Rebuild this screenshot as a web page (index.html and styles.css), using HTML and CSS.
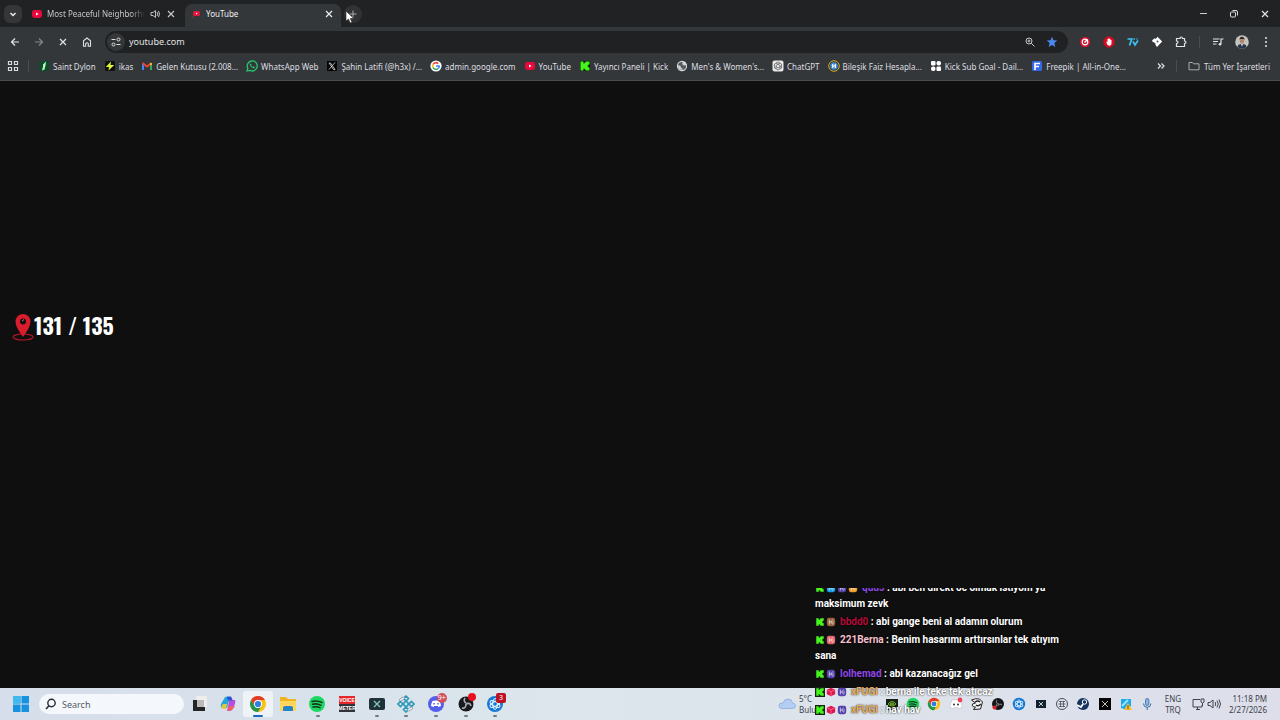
FILE: index.html
```html
<!DOCTYPE html>
<html lang="tr">
<head>
<meta charset="utf-8">
<title>YouTube</title>
<link rel="stylesheet" href="styles.css">
</head>
<body>
<svg class="defs" aria-hidden="true">
  <symbol id="x" viewBox="0 0 12 12"><path d="M3 3l6 6M9 3l-6 6" stroke="currentColor" stroke-width="1.2" fill="none"/></symbol>
  <symbol id="yt" viewBox="0 0 12 12"><rect x="1" y="2" width="10" height="8" rx="2.4" fill="#e8083c"/><path d="M5 4.400v3.200L7.700 6z" fill="#fff"/></symbol>
  <symbol id="kick" viewBox="0 0 12 12"><path d="M1.500 1.500h3v2h1v-1h1v-1h4v3h-1v1h-1v1h1v1h1v3h-4v-1h-1v-1h-1v2h-3z" fill="#45f51c"/></symbol>
  <symbol id="chrome" viewBox="0 0 18 18"><circle cx="9" cy="9" r="8" fill="#fbc116"/><path d="M9 5h6.900A8 8 0 0 0 2.100 5L5.500 11z" fill="#e33b2e"/><path d="M2.100 5A8 8 0 0 0 9 17l3.500-6L9 13 5.500 11z" fill="#219653"/><circle cx="9" cy="9" r="4" fill="#fff"/><circle cx="9" cy="9" r="3.100" fill="#2d7de5"/></symbol>
  <symbol id="spotify" viewBox="0 0 18 18"><circle cx="9" cy="9" r="8" fill="#1ed760"/><path d="M4 6.500q5-1.500 10 1M4.500 9.300q4.500-1.200 8.500 1M5 12q4-1 7 .700" fill="none" stroke="#12351f" stroke-width="1.500" stroke-linecap="round"/></symbol>
  <symbol id="obs" viewBox="0 0 18 18"><circle cx="9" cy="9" r="7.500" fill="#191a1e"/><path d="M8 3q-2 3 1 5M14 11q-1-4-5-2M5 13q4 1 4-4" fill="none" stroke="#a9adb5" stroke-width="1.600"/></symbol>
  <symbol id="bnet" viewBox="0 0 18 18"><circle cx="9" cy="9" r="8" fill="#1678d4"/><ellipse cx="9" cy="9" rx="5.500" ry="2.300" transform="rotate(30 9 9)" fill="none" stroke="#e5f5ff"/><ellipse cx="9" cy="9" rx="5.500" ry="2.300" transform="rotate(90 9 9)" fill="none" stroke="#e5f5ff"/><ellipse cx="9" cy="9" rx="5.500" ry="2.300" transform="rotate(150 9 9)" fill="none" stroke="#e5f5ff"/></symbol>
  <symbol id="cube" viewBox="0 0 12 12"><path d="M6 .8l5 2.400v5.600l-5 2.400-5-2.400V3.200z" fill="#dd174f"/><path d="M1 3.200l5 2.400 5-2.400M6 5.600v5.500" stroke="#ff6e92" fill="none"/></symbol>
  <symbol id="badge" viewBox="0 0 12 12"><rect x="1" y="1" width="10" height="10" rx="2.500" fill="currentColor"/><path d="M4 3v6M4 6h2l2-3M6 6l2 3M8.500 5v3" stroke="#fff" stroke-opacity=".75" fill="none"/></symbol>
  <symbol id="xsplit" viewBox="0 0 18 18"><rect x="1" y="3" width="16" height="12" rx="2" fill="#203039"/><path d="M6 6l6 6M12 6l-6 6" stroke="#82c7ab" stroke-width="1.400"/></symbol>
</svg>

<header class="browser">
  <div class="tabs" role="tablist">
    <button class="tab-search" aria-label="Search tabs"><svg class="i12" viewBox="0 0 12 12"><path d="M3.500 5L6 7.500 8.500 5" fill="none" stroke="#eee" stroke-width="1.500"/></svg></button>
    <div class="tab" role="tab">
      <svg class="i12"><use href="#yt"/></svg><span class="tab-title fade">Most Peaceful Neighborho</span>
      <svg class="i12" viewBox="0 0 12 12"><path d="M2 4.500h2L6.500 2.500v7L4 7.500H2z" fill="none" stroke="#bbb"/><path d="M8 4q1.500 2 0 4M9.500 3q2 3 0 6" fill="none" stroke="#bbb"/></svg>
      <button class="icon close" aria-label="Close tab"><svg class="i12"><use href="#x"/></svg></button>
    </div>
    <div class="tab active" role="tab" aria-selected="true">
      <svg class="i12" viewBox="0 0 12 12"><rect x="3" y="3" width="7" height="5" rx="1.500" fill="#e2153e"/><path d="M6 4.500v2L7.500 5.500z" fill="#fff"/><path d="M2.500 8.500l1 1" stroke="#a44"/></svg><span class="tab-title">YouTube</span>
      <button class="icon close" aria-label="Close tab"><svg class="i12"><use href="#x"/></svg></button>
    </div>
    <button class="new-tab" aria-label="New tab"><svg class="i12" viewBox="0 0 12 12"><path d="M6 2.500v7M2.500 6h7" stroke="#aaa"/></svg></button>
    <div class="window-controls">
      <button class="icon" aria-label="Minimize"><svg class="i12" viewBox="0 0 12 12"><path d="M3 5.500h7" stroke="#ccc"/></svg></button>
      <button class="icon" aria-label="Restore"><svg class="i12" viewBox="0 0 12 12"><rect x="2.500" y="4" width="5" height="5" rx="1" fill="none" stroke="#ddd"/><path d="M4.500 2.500H8q1.500 0 1.500 1.500v3.500" fill="none" stroke="#ddd"/></svg></button>
      <button class="icon" aria-label="Close"><svg class="i12"><use href="#x"/></svg></button>
    </div>
  </div>

  <div class="toolbar">
    <button class="icon" aria-label="Back"><svg class="i12" viewBox="0 0 12 12"><path d="M10 6H2.500M6 2.500L2.500 6 6 9.500" fill="none" stroke="#e6e6e6" stroke-width="1.200"/></svg></button>
    <button class="icon" aria-label="Forward"><svg class="i12" viewBox="0 0 12 12"><path d="M2 6h7.500M6 2.500L9.500 6 6 9.500" fill="none" stroke="#85888b" stroke-width="1.200"/></svg></button>
    <button class="icon" aria-label="Stop"><svg class="i12"><use href="#x"/></svg></button>
    <button class="icon" aria-label="Home"><svg class="i12" viewBox="0 0 12 12"><path d="M2.500 10.300V4.800L6 2l3.500 2.800v5.500H7.300V7.500q-1.300-1.600-2.600 0v2.800z" fill="none" stroke="#e0e0e0" stroke-width="1.100"/></svg></button>
    <div class="omnibox">
      <button class="site" aria-label="Site information"><svg class="i12" viewBox="0 0 12 12"><path d="M1.500 3.500h4M6.500 8.500h4" stroke="#ddd" stroke-width="1.200"/><circle cx="8.500" cy="3.500" r="1.500" fill="none" stroke="#ddd"/><circle cx="3.500" cy="8.500" r="1.500" fill="none" stroke="#ddd"/></svg></button>
      <input class="url" type="text" aria-label="Address" value="youtube.com">
      <button class="icon narrow" aria-label="Zoom"><svg class="i12" viewBox="0 0 12 12"><circle cx="5" cy="5" r="3" fill="none" stroke="#c8c8c8"/><path d="M7.200 7.200l3.300 3.300M3.500 5h3M5 3.500v3" stroke="#c8c8c8"/></svg></button>
      <button class="icon narrow" aria-label="Bookmark"><svg class="i12" viewBox="0 0 12 12"><path d="M6 .800l1.500 3.500 3.800.300-2.900 2.500.9 3.800L6 8.900l-3.300 2 .9-3.800L.7 4.600l3.800-.3z" fill="#4c87f0"/></svg></button>
    </div>
    <button class="icon" aria-label="Extension"><svg class="i12" viewBox="0 0 12 12"><circle cx="6" cy="6" r="5.200" fill="#cf1131"/><circle cx="6" cy="6" r="2.800" fill="none" stroke="#fff" stroke-width="1.200"/><path d="M5.500 6.500L8.500 3.500" stroke="#fff" stroke-width="1.500"/></svg></button>
    <button class="icon" aria-label="Ad blocker"><svg class="i12" viewBox="0 0 12 12"><path d="M4 .500h4L11.500 4v4L8 11.500H4L.5 8V4z" fill="#d80a20"/><path d="M3.500 5.500l1 .500V3h1V2.200h1V3h1v1h1v3.500q0 2-2 2.300T3.500 7z" fill="#fff"/></svg></button>
    <button class="icon" aria-label="7TV"><svg class="i12" viewBox="0 0 12 12"><path d="M.5 3h4.300L2.500 9.500M6 5.500l2 3.500 3-4.500M6.500 3h1.500M9.500 3h1" fill="none" stroke="#39c4f4" stroke-width="1.700"/></svg></button>
    <button class="icon" aria-label="Extension"><svg class="i12" viewBox="0 0 12 12"><path d="M6.500 .800l4.700 4.700L6 11 4.500 9V7.500L.8 5 3 2.500l2 .200z" fill="#fff"/><circle cx="6.500" cy="5.500" r="1" fill="#555"/></svg></button>
    <button class="icon" aria-label="Extensions"><svg class="i12" viewBox="0 0 12 12"><path d="M1.500 2.500H5q0-1.500 1.200-1.500T7.500 2.500h2V5q1.500 0 1.500 1.200T9.500 7.500v3h-8v-3q1.500 0 1.500-1.200T1.500 5z" fill="none" stroke="#e4e4e4" stroke-width="1.200"/></svg></button>
    <span class="rule"></span>
    <button class="icon" aria-label="Media"><svg class="i12" viewBox="0 0 12 12"><path d="M1 3h6.500M1 5.500h5M1 8h3.500M9 8V3h2.500" fill="none" stroke="#e4e4e4" stroke-width="1.200"/><circle cx="8" cy="8.200" r="1.300" fill="#e4e4e4"/></svg></button>
    <button class="icon" aria-label="Profile"><svg class="i14" viewBox="0 0 14 14"><circle cx="7" cy="7" r="6.800" fill="#c3c4bf"/><path d="M2.500 12q0-3 4.500-3t4.500 3Q7 15.500 2.500 12z" fill="#26344a"/><ellipse cx="7" cy="5.800" rx="2.200" ry="3" fill="#b78670"/><path d="M4.500 5q0-3.300 2.500-3.300T9.500 5L8.800 4H5.200z" fill="#302925"/><path d="M6.200 9h1.600L7 12z" fill="#fff"/></svg></button>
    <button class="icon" aria-label="Menu"><svg class="i12" viewBox="0 0 12 12" fill="#e4e4e4"><circle cx="6" cy="2" r="1"/><circle cx="6" cy="6" r="1"/><circle cx="6" cy="10" r="1"/></svg></button>
  </div>

  <nav class="bookmarks" aria-label="Bookmarks">
    <button class="icon apps" aria-label="Apps"><svg class="i12" viewBox="0 0 12 12" fill="none" stroke="#d8d8d8" stroke-width="1.200"><path d="M1.500 1.500h3v3h-3zM7.500 1.500h3v3h-3zM1.500 7.500h3v3h-3zM7.500 7.500h3v3h-3z"/></svg></button>
    <span class="rule"></span>
    <a class="bm" href="#"><svg class="i12" viewBox="0 0 12 12"><rect x="1" y="1" width="10" height="10" rx="2" fill="#0f4a29"/><path d="M8 1.500L5 4.500v2L4 10.500l2.500-1 1-4z" fill="#bdf3c5"/></svg>Saint Dylon</a>
    <a class="bm" href="#"><svg class="i12" viewBox="0 0 12 12"><rect x="1" y="1" width="10" height="10" rx="1.500" fill="#111"/><path d="M7 1.500L1.800 7H5l-.5 3.500L10.200 5H6.500z" fill="#dafa39"/></svg>ikas</a>
    <a class="bm" href="#"><svg class="i12" viewBox="0 0 12 12" fill="none" stroke-width="2"><path d="M2 10V4" stroke="#4285f4"/><path d="M10 10V4" stroke="#34a853"/><path d="M1.500 3L6 6.500 10.500 3" stroke="#ea4335"/><path d="M10 5V3" stroke="#fbbc04"/></svg>Gelen Kutusu (2.008...</a>
    <a class="bm" href="#"><svg class="i12" viewBox="0 0 12 12"><path d="M1 11l.8-2.800A5 5 0 1 1 4 10.400z" fill="none" stroke="#25c768" stroke-width="1.300"/><path d="M4 3.500q-1 3 4 5l1-1.500-1.500-.7-.7.700Q5.300 6.300 5.200 5l.5-.5z" fill="#25c768"/></svg>WhatsApp Web</a>
    <a class="bm" href="#"><svg class="i12" viewBox="0 0 12 12"><rect x="1" y="1" width="10" height="10" fill="#050505"/><path d="M3 3h1.500L9 9.500H7.500zM9 2.500L3 9.500" fill="none" stroke="#ddd" stroke-width=".8"/></svg>Şahin Latifi (@h3x) /...</a>
    <a class="bm" href="#"><svg class="i12" viewBox="0 0 12 12"><circle cx="6" cy="6" r="5.600" fill="#fff"/><g fill="none" stroke-width="1.600"><path d="M8.300 3.600A3.300 3.300 0 0 0 3 4.500" stroke="#ea4335"/><path d="M3 4.500a3.300 3.300 0 0 0 0 3" stroke="#fbbc04"/><path d="M3 7.500a3.300 3.300 0 0 0 5.200 1" stroke="#34a853"/><path d="M8.200 8.500Q9.300 7.500 9.200 6H6" stroke="#4285f4"/></g></svg>admin.google.com</a>
    <a class="bm" href="#"><svg class="i12"><use href="#yt"/></svg>YouTube</a>
    <a class="bm" href="#"><svg class="i12" viewBox="0 0 12 12"><rect x="1" y="1" width="10" height="10" rx="1" fill="#071509"/><use href="#kick" width="12" height="12"/></svg>Yayıncı Paneli | Kick</a>
    <a class="bm" href="#"><svg class="i12" viewBox="0 0 12 12"><circle cx="6" cy="6" r="4.600" fill="#555a5e" stroke="#d6d6d6" stroke-width="1.100"/><path d="M1.500 5l3 1 .5 2 1.500.500V10L3 9zM5 1.500l2 1L6 4l2 1.500 2.500-.500L9 2z" fill="#d6d6d6"/></svg>Men's &amp; Women's...</a>
    <a class="bm" href="#"><svg class="i12" viewBox="0 0 12 12"><rect x=".5" y=".5" width="11" height="11" rx="2" fill="#e8e8e8"/><path d="M6 2l3.500 2v4L6 10 2.500 8V4zM4 3l4 2.500V9M8 3L4 5.500V9M4 6.500L6 8l3.500-2" fill="none" stroke="#555" stroke-width=".7"/></svg>ChatGPT</a>
    <a class="bm" href="#"><svg class="i12" viewBox="0 0 12 12"><circle cx="6" cy="6" r="5.300" fill="#383b22" stroke="#d1ad2a"/><circle cx="6" cy="6" r="3.800" fill="#428bdc"/><path d="M4.700 4v4M7.300 4v4M4.700 6h2.600" stroke="#fff" stroke-width="1.100"/></svg>Bileşik Faiz Hesapla...</a>
    <a class="bm" href="#"><svg class="i12" viewBox="0 0 12 12" fill="#fff"><rect x="1" y="1" width="4.500" height="4.500" rx="1"/><rect x="6.500" y="1" width="4.500" height="4.500" rx="2"/><rect x="1" y="6.500" width="4.500" height="4.500" rx="2"/><rect x="6.500" y="6.500" width="4.500" height="4.500" rx="1"/></svg>Kick Sub Goal - Dail...</a>
    <a class="bm" href="#"><svg class="i12" viewBox="0 0 12 12"><rect x="1" y="1" width="10" height="10" rx="1.500" fill="#3568e8"/><path d="M4 10V3.500h5M4 6.500h4" fill="none" stroke="#fff" stroke-width="1.700"/></svg>Freepik | All-in-One...</a>
    <button class="icon more" aria-label="More bookmarks"><svg class="i12" viewBox="0 0 12 12"><path d="M3 3.500L5.500 6 3 8.500M6.500 3.500L9 6 6.500 8.500" fill="none" stroke="#e4e4e4" stroke-width="1.200"/></svg></button>
    <span class="rule"></span>
    <a class="bm all" href="#"><svg class="i12" viewBox="0 0 12 12"><path d="M1 2.500h3.500l1 1.300H11v6H1z" fill="none" stroke="#aaa"/></svg>Tüm Yer İşaretleri</a>
  </nav>
</header>

<main class="page"></main>

<footer class="taskbar">
  <button class="start" aria-label="Start"><svg class="i18" viewBox="0 0 18 18"><path d="M1 1h7.500v7.500H1zM9.500 1H17v7.500H9.500zM1 9.500h7.500V17H1zM9.500 9.500H17V17H9.500z" fill="#1792df"/><path d="M1 1h7.500v7.500H1z" fill="#42b9ee"/></svg></button>
  <label class="search"><svg class="i12" viewBox="0 0 12 12"><circle cx="6.500" cy="5" r="3.700" fill="none" stroke="#252a34" stroke-width="1.400"/><path d="M4 7.800L1 11" stroke="#252a34" stroke-width="1.600"/></svg><input type="search" placeholder="Search" aria-label="Search"></label>
  <div class="apps-row">
    <button class="app" aria-label="Task view"><svg class="i18" viewBox="0 0 18 18"><path d="M6 1h11v11H6z" fill="#eeeeec"/><path d="M3 5h4v7h8v4H3z" fill="#252525"/><path d="M7 5h7v7H7z" fill="#bbb"/></svg></button>
    <button class="app" aria-label="Copilot"><svg class="i18" viewBox="0 0 18 18"><path d="M6 2h5L8 13H4q-3 0-2-4z" fill="#26a6d8"/><path d="M4 9h4l-1 5H4q-3-1 0-5z" fill="#e6c43c"/><path d="M11 2q2 0 2.500 3H16q1 2-1 6l-2 4q-1 1-5 1z" fill="#b34cdf"/><path d="M8 16l2-5h6l-3 4q-1 1-5 1z" fill="#f15d6c"/><path d="M7.500 1.500H12l1.500 4H9z" fill="#2855cf"/></svg></button>
    <button class="app current" aria-label="Chrome"><svg class="i18"><use href="#chrome"/></svg></button>
    <button class="app" aria-label="Files"><svg class="i18" viewBox="0 0 18 18"><path d="M1 2h6l2 2h8v12H1z" fill="#eeb421"/><path d="M1 6h16v10H1z" fill="#ffd55d"/><path d="M4 13q0-2 2-2h6q2 0 2 2v3H4z" fill="#2384c6"/></svg></button>
    <button class="app run" aria-label="Spotify"><svg class="i18"><use href="#spotify"/></svg></button>
    <button class="app" aria-label="Voicemeeter"><svg class="i18" viewBox="0 0 18 18"><path d="M1 1h16v8H1z" fill="#e5282b"/><path d="M1 9h16v8H1z" fill="#30333a"/><text x="9" y="7" class="tile">VOICE</text><text x="9" y="15" class="tile">METER</text></svg></button>
    <button class="app run" aria-label="XSplit"><svg class="i18"><use href="#xsplit"/></svg></button>
    <button class="app run" aria-label="Utility"><svg class="i18" viewBox="0 0 18 18" fill="none" stroke="#2d99bb" stroke-width="1.600"><path d="M9 1l2.500 2.500L9 6 6.500 3.500zM3.500 6.500L6 9l-2.500 2.500L1 9zM14.500 6.500L17 9l-2.500 2.500L12 9zM9 12l2.500 2.500L9 17l-2.500-2.500z"/><circle cx="9" cy="9" r="2.200"/><ellipse cx="5" cy="4" rx="3" ry="1.300" transform="rotate(-30 5 4)" fill="#e6edf2" stroke="#7a8494" stroke-width=".6"/><ellipse cx="13" cy="14" rx="3" ry="1.300" transform="rotate(-30 13 14)" fill="#e6edf2" stroke="#7a8494" stroke-width=".6"/></svg></button>
    <button class="app run" aria-label="Discord"><svg class="i18" viewBox="0 0 18 18"><circle cx="9" cy="9" r="8" fill="#5560ea"/><path d="M5.500 6q3.500-1 7 0 1.500 3 1.500 5l-2.500 1-.7-1H7.200l-.7 1L4 11q0-2 1.500-5z" fill="#fff"/><path d="M7 8v1.500M11 8v1.500" stroke="#5560ea" stroke-width="1.500"/></svg><span class="count soft">9+</span></button>
    <button class="app run" aria-label="OBS"><svg class="i18"><use href="#obs"/></svg><span class="count dot"></span></button>
    <button class="app run" aria-label="Battle.net"><svg class="i18"><use href="#bnet"/></svg><span class="count square">3</span></button>
  </div>
  <div class="weather"><svg class="cloud" viewBox="0 0 18 14"><path d="M4 11.500Q1 11.500 1 8.500T5 6q1-4 5-4 4 0 4.500 4 3 .3 3 3T14 11.500z" fill="#b4cdf2" stroke="#87a4d6" stroke-width=".7"/></svg><span>5°C<br>Bulu</span></div>
  <div class="tray">
    <svg class="i14" viewBox="0 0 14 14"><path d="M1 2h12v11H1z" fill="#142013"/><path d="M3 7q4-5 8 0-4 4-8 0zM5 7q2-2 4 0-2 2-4 0" fill="none" stroke="#76b52b"/></svg>
    <svg class="i14"><use href="#spotify"/></svg>
    <svg class="i14"><use href="#chrome"/></svg>
    <svg class="i14" viewBox="0 0 14 14"><path d="M3 3q4-1 8 0 2 4 2 7l-3 2-1-1.500H5L4 12l-3-2q0-3 2-7z" fill="#fff" stroke="#b5b7c4" stroke-width=".5"/><circle cx="5" cy="7.500" r="1" fill="#333"/><circle cx="9" cy="7.500" r="1" fill="#333"/><circle cx="11" cy="3" r="2.400" fill="#ef4255"/></svg>
    <svg class="i14" viewBox="0 0 14 14"><path d="M1.500 3q4-2 8-1l3 3-2 7-7 .500 2-2.500q-4 0-3-3l3-1z" fill="#f4f4f4" stroke="#222"/><path d="M5 5q3-2 5 0M6 8q2 2 5-1" fill="none" stroke="#222" stroke-width="1.300"/></svg>
    <svg class="i14" viewBox="0 0 14 14"><circle cx="7" cy="7" r="6" fill="#14151a"/><path d="M6 3q-2 3 2 4M11 8q-3-2-4 1M3 10q3 0 3-3" fill="none" stroke="#777" stroke-width="1.200"/><circle cx="3.500" cy="10.500" r="2" fill="#dc2229"/></svg>
    <svg class="i14"><use href="#bnet"/></svg>
    <svg class="i14" viewBox="0 0 14 14"><path d="M2 3h10v8H2z" fill="#142230"/><path d="M5 5l4 4M9 5L5 9" stroke="#c5d1d8"/></svg>
    <svg class="i14" viewBox="0 0 14 14" fill="none" stroke="#4d5058"><circle cx="7" cy="7" r="5.500"/><path d="M4 4.500h6M3.500 7h7M4 9.500h6M5.500 4v6M8.500 4v6" stroke-width=".8"/></svg>
    <svg class="i14" viewBox="0 0 14 14"><circle cx="7" cy="7" r="6" fill="#16345f"/><circle cx="8.500" cy="5" r="2.200" fill="#16345f" stroke="#fff"/><path d="M1 8l4 2 2-3" fill="none" stroke="#fff" stroke-width="1.800"/></svg>
    <svg class="i14" viewBox="0 0 14 14"><path d="M1 1h12v12H1z" fill="#050505"/><path d="M4 4l6 6M10 4l-6 6" stroke="#bbb"/></svg>
    <svg class="i14" viewBox="0 0 14 14"><path d="M2 2h10v7l-4 4-6-2z" fill="#1eabe9"/><path d="M3 9l6-6" stroke="#9ce2ff" stroke-width="2"/><path d="M9 6l4 7H5z" fill="#ffbd22"/><path d="M9 8.500v2M9 11.200v1" stroke="#333"/></svg>
    <svg class="i14" viewBox="0 0 14 14"><rect x="5.500" y="1.500" width="3.400" height="7" rx="1.700" fill="#86b5e5" stroke="#396ca6" stroke-width=".8"/><path d="M3.500 6.500q0 3.800 3.700 3.800t3.700-3.800M7.200 10.500V13" fill="none" stroke="#396ca6"/></svg>
  </div>
  <div class="lang">ENG<br>TRQ</div>
  <svg class="i14" viewBox="0 0 14 14" fill="none" stroke="#3e4350"><path d="M9 2.500H2v7.500h9V8M5 12.500h4M6.500 10v2.500M10 2h3v3q-1.500 2-3 0zM11.500 6v3"/></svg>
  <svg class="i14 speaker" viewBox="0 0 14 14" fill="none" stroke="#3e4350"><path d="M1 5.500h2L6 3v8L3 8.500H1zM8 5q1.500 2 0 4M10 3.500q2.500 3.500 0 7M12 2.500q3 4.500 0 9"/></svg>
  <time class="clock" datetime="2026-02-27T23:18">11:18 PM<br>2/27/2026</time>
</footer>

<div class="counter"><svg class="pin" viewBox="0 0 22 28"><ellipse cx="11" cy="24" rx="10" ry="3" fill="none" stroke="#b31627" stroke-width="1.200"/><path d="M11 24Q3.500 14 3.500 8.500a7.500 7.500 0 0 1 15 0Q18.500 14 11 24z" fill="#d91c2e"/><circle cx="11" cy="8.500" r="3" fill="#1c0d10"/><path d="M10 8l2-1.500" stroke="#887"/></svg><span class="score">131 / 135</span></div>

<section class="chat" aria-label="Chat">
  <p><svg class="b"><use href="#kick"/></svg><svg class="b sky"><use href="#badge"/></svg><svg class="b indigo"><use href="#badge"/></svg><svg class="b orange"><use href="#badge"/></svg><b class="violet">quu5</b> : abi ben direkt öc olmak istiyom ya<br>maksimum zevk</p>
  <p><svg class="b"><use href="#kick"/></svg><svg class="b brown"><use href="#badge"/></svg><b class="red">bbdd0</b> : abi gange beni al adamın olurum</p>
  <p><svg class="b"><use href="#kick"/></svg><svg class="b rose"><use href="#badge"/></svg><b class="pink">221Berna</b> : Benim hasarımı arttırsınlar tek atıyım<br>sana</p>
  <p><svg class="b"><use href="#kick"/></svg><svg class="b indigo"><use href="#badge"/></svg><b class="violet">lolhemad</b> : abi kazanacağız gel</p>
  <p><svg class="b dark"><use href="#kick"/></svg><svg class="b"><use href="#cube"/></svg><svg class="b indigo"><use href="#badge"/></svg><b class="gold">xFUGI</b> : berna ile teke tek atıcaz</p>
  <p><svg class="b dark"><use href="#kick"/></svg><svg class="b"><use href="#cube"/></svg><svg class="b indigo"><use href="#badge"/></svg><b class="gold">xFUGI</b> : hav hav</p>
</section>

<svg class="cursor" viewBox="0 0 10 14" aria-hidden="true"><path d="M1 1v10l2.500-2L5.200 13l1.800-.8-1.700-3.700H8.800z" fill="#fff" stroke="#222" stroke-width=".6"/></svg>
</body>
</html>
```
FILE: styles.css
```css
* { box-sizing: border-box; }
body {
  margin: 0;
  min-height: 100vh;
  display: flex;
  flex-direction: column;
  position: relative;
  overflow: hidden;
  background: #0f0f0f;
  color: #e3e3e3;
  font-family: "Noto Sans", "Open Sans", sans-serif;
  font-size: 8px;
}
button { padding: 0; border: 0; background: none; color: inherit; font: inherit; }
input { border: 0; padding: 0; background: none; font: inherit; outline: none; min-width: 0; }
svg { display: block; flex: none; }
.defs { position: absolute; width: 0; height: 0; }
.i12 { width: 12px; height: 12px; }
.i14 { width: 14px; height: 14px; }
.i18 { width: 18px; height: 18px; }
.icon { width: 24px; height: 20px; flex: none; display: flex; align-items: center; justify-content: center; }
.rule { width: 1px; height: 12px; background: #4a4d50; flex: none; margin: 0 6px; }

/* Browser */
.browser { background: #34373a; border-bottom: 1px solid #4a4c4e; }
.tabs { display: flex; align-items: center; height: 27px; background: #202224; padding-left: 4px; }
.tab-search { width: 18px; height: 18px; border-radius: 6px; background: #343638; display: flex; align-items: center; justify-content: center; }
.tab { width: 156px; height: 23px; display: flex; align-items: center; padding: 0 6px 4px 5px; align-self: flex-end; gap: 4px; color: #c4c6c8; }
.tab-title { flex: 1; white-space: nowrap; overflow: hidden; }
.fade { -webkit-mask-image: linear-gradient(90deg, #000 85%, transparent); mask-image: linear-gradient(90deg, #000 85%, transparent); }
.tab .close { width: 12px; }
.tab:not(.active) { width: 163px; padding: 0 8px 4px 9px; }
.active { background: #34373a; border-radius: 7px 7px 0 0; color: #eee; }
.new-tab { width: 18px; height: 18px; border-radius: 9px; background: #303234; display: flex; align-items: center; justify-content: center; margin-left: 3px; }
.window-controls { margin-left: auto; display: flex; gap: 7px; padding-right: 3px; }
.toolbar { display: flex; align-items: center; height: 29px; padding: 0 2px 0 3px; }
.omnibox { flex: 1; display: flex; align-items: center; height: 22px; margin: 0 5px 0 6px; padding: 0 5px 0 2px; border-radius: 11px; background: #1f2123; }
.site { width: 18px; height: 18px; border-radius: 9px; background: #34373a; display: flex; align-items: center; justify-content: center; }
.url { flex: 1; margin-left: 4px; color: #e3e3e3; font-size: 9px; }
.narrow { width: 22px; }
.bookmarks { display: flex; align-items: center; height: 24px; padding: 0 10px 4px 1px; }
.bookmarks .rule { margin: 0 9px 0 3px; }
.bm { display: flex; align-items: center; gap: 3px; margin-right: 8px; color: #dedfe0; text-decoration: none; white-space: nowrap; }
.more { margin-left: auto; }
.bookmarks .more + .rule { margin: 0 11px 0 3px; }
.bookmarks .all { margin-right: 0; gap: 4px; }
.page { flex: 1; background: #0f0f0f; }

/* Taskbar */
.taskbar { display: flex; align-items: center; height: 32px; color: #3c3f49; background: linear-gradient(90deg, #d5deea, #dce6ec 45%, #dddeea); padding-right: 13px; }
.start { margin: 0 9px 0 12px; }
.search { display: flex; align-items: center; gap: 5px; width: 145px; height: 20px; border-radius: 10px; background: #f4f7fb; padding: 0 6px; }
.search input { width: 100px; font-size: 9px; color: #555b66; }
.search input::placeholder { color: #555b66; opacity: 1; }
.apps-row { display: grid; grid-template-columns: repeat(11, 1fr); width: 326px; height: 26px; }
.app { position: relative; display: flex; align-items: center; justify-content: center; }
.current { background: #eff3f8; border-radius: 3px; }
.run::after, .current::after { content: ""; position: absolute; bottom: 0; left: 13px; width: 4px; height: 2px; border-radius: 1px; background: #747984; }
.current::after { left: 10px; width: 10px; background: #1769bd; }
.tile { font: bold 5px "Liberation Sans", sans-serif; fill: #fff; text-anchor: middle; }
.count { position: absolute; top: 2px; right: 4px; width: 10px; height: 10px; border-radius: 5px; line-height: 10px; font-size: 7px; color: #fff; text-align: center; }
.soft { background: #d24f5c; }
.dot { background: #e8101e; width: 8px; height: 8px; }
.square { background: #bc1324; border-radius: 2px; }
.weather { display: flex; align-items: center; gap: 3px; margin-left: auto; width: 103px; line-height: 11px; }
.cloud { width: 18px; height: 14px; }
.tray { display: grid; grid-template-columns: repeat(13, 1fr); width: 277px; justify-items: center; }
.lang { width: 30px; line-height: 11px; text-align: center; margin-right: 3px; }
.speaker { margin-left: 2px; }
.clock { width: 46px; text-align: right; line-height: 11px; white-space: nowrap; }

/* Overlays */
.counter { position: absolute; left: 12px; top: 312px; display: flex; align-items: center; color: #fff; font: bold 22px/26px "Oswald", "Roboto Condensed", "Roboto", sans-serif; }
.score { padding-bottom: 4px; }
.pin { width: 22px; height: 28px; }
.chat { position: absolute; left: 815px; bottom: 1px; width: 256px; height: 131px; overflow: hidden; display: flex; flex-direction: column; justify-content: flex-end; color: #fff; font: bold 10px/16px "Roboto", sans-serif; text-shadow: 0 0 2px #000; }
.chat p { margin: 0; padding: 1px 0; flex: none; white-space: nowrap; }
.chat b { margin-left: 3px; font-weight: inherit; }
.b { display: inline-block; width: 10px; height: 10px; margin-right: 1px; vertical-align: -2px; }
.dark { background: #132413; }
.sky { color: #159fe8; }
.indigo { color: #5340a8; }
.orange { color: #f09a28; }
.brown { color: #98613a; }
.rose { color: #e2646f; }
.violet { color: #9148e5; }
.red { color: #b60b3a; }
.pink { color: #f7c0cd; }
.gold { color: #e8ae58; }
.cursor { position: absolute; left: 345px; top: 10px; width: 10px; height: 14px; }
```
